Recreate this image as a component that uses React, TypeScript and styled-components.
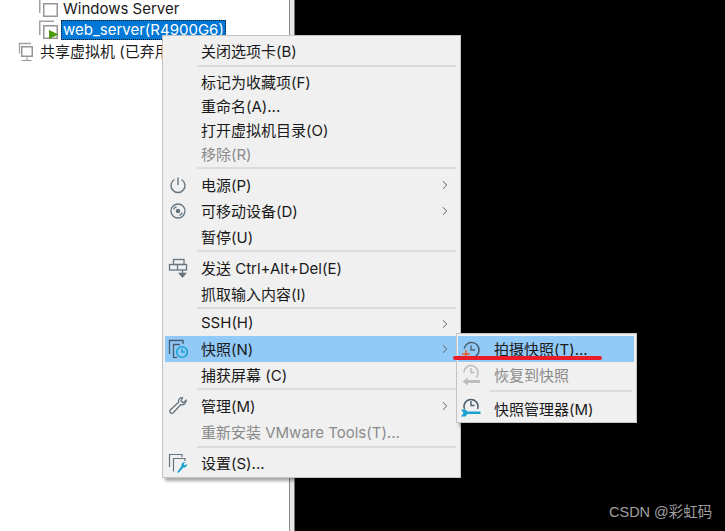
import React from "react";
import styled, { createGlobalStyle } from "styled-components";
import { ChevronRight } from "lucide-react";

const GlobalStyle = createGlobalStyle`
  html, body {
    margin: 0;
    padding: 0;
    background: #000000;
  }
  body {
    width: 725px;
    height: 531px;
    overflow: hidden;
    font-family: "Inter", "Noto Sans CJK SC", sans-serif;
    font-size: 15px;
    color: #1a1a1a;
  }
`;

const Page = styled.div`
  position: relative;
  display: flex;
  width: 725px;
  height: 531px;
  overflow: hidden;
  background: #000000;
`;

const Library = styled.div`
  width: 289px;
  height: 531px;
  background: #ffffff;
  overflow: hidden;
`;

const Splitter = styled.div`
  width: 6px;
  height: 531px;
  box-sizing: border-box;
  background: #e6e6e6;
  border-left: 1px solid #8a8a8a;
  border-right: 1px solid #707070;
`;

const Tree = styled.div`
  display: flex;
  flex-direction: column;
`;

const TreeRow = styled.div<{ $indent: number }>`
  display: flex;
  align-items: center;
  gap: 2px;
  height: 22px;
  padding-left: ${(p) => p.$indent}px;
  white-space: nowrap;
`;

// the first row is scrolled partly out of the pane
const ClippedRow = styled(TreeRow)`
  height: 18px;
  margin-bottom: 1px;
  align-items: flex-end;
`;

const TreeLabel = styled.span<{ $selected?: boolean }>`
  padding: 0 2px;
  line-height: 20px;
  outline: ${(p) => (p.$selected ? "1px dotted #1a1a1a" : "none")};
  outline-offset: -1px;
  background: ${(p) => (p.$selected ? "#0078d7" : "transparent")};
  color: ${(p) => (p.$selected ? "#ffffff" : "#1a1a1a")};
`;

const ClippedLabel = styled(TreeLabel)`
  align-self: flex-start;
  line-height: 17px;
`;

const Menu = styled.div`
  position: absolute;
  left: 162px;
  top: 35px;
  width: 299px;
  box-sizing: border-box;
  padding: 2px 2px 1px;
  background: #f0f0f0;
  border: 1px solid #c4c4c4;
  box-shadow: 3px 3px 3px rgba(0, 0, 0, 0.35);
`;

const SubMenu = styled(Menu)`
  left: 456px;
  top: 333px;
  width: 181px;
  padding: 2px 2px 0 1px;
  z-index: 2;
`;

const Row = styled.div<{ $height: number; $active?: boolean; $disabled?: boolean }>`
  display: flex;
  align-items: center;
  height: ${(p) => p.$height}px;
  padding-left: 36px;
  background: ${(p) => (p.$active ? "#91c9f7" : "transparent")};
  color: ${(p) => (p.$disabled ? "#8a8a8a" : "#1a1a1a")};
  white-space: nowrap;
`;

const Label = styled.span`
  flex: 1;
  padding-bottom: 2px;
`;

const IconSlot = styled.span<{ $x: number }>`
  position: absolute;
  left: ${(p) => p.$x}px;
  display: flex;
`;

const RowArrow = styled(ChevronRight)`
  width: 14px;
  height: 14px;
  margin-right: 6px;
  color: #555555;
`;

const Separator = styled.div<{ $top: number; $bottom: number }>`
  height: 2px;
  margin: ${(p) => p.$top}px 2px ${(p) => p.$bottom}px 32px;
  background: #dcdcdc;
`;

const RedStroke = styled.div`
  position: absolute;
  left: 453px;
  top: 356px;
  width: 149px;
  height: 4px;
  border-radius: 2px;
  background: #ea1c28;
  z-index: 3;
`;

const Watermark = styled.div`
  position: absolute;
  left: 609px;
  top: 503px;
  color: #a0a0a0;
  font-family: "Liberation Sans", "Noto Sans CJK SC", sans-serif;
  font-size: 14.5px;
  line-height: 18px;
  white-space: nowrap;
`;

const SLATE = "#66757f";
const DARK = "#465a6b";
const CYAN = "#1ba1d0";

const VmIcon = ({ play }: { play?: boolean }) => (
  <svg width="20" height="20" viewBox="0 0 20 20" fill="none">
    <path d="M0.75 15V1.25H15" stroke="#a2a2a2" strokeWidth="1.5" />
    <rect x="4.75" y="5.75" width="13.5" height="12.5" fill="#fff" stroke="#969696" strokeWidth="1.5" />
    {play && <path d="M10 10L19.5 14.5L10 19Z" fill="#4f9a0c" />}
  </svg>
);

const SharedIcon = () => (
  <svg width="20" height="20" viewBox="0 0 20 20" fill="none">
    <path d="M3.5 11.5V1.5H15" stroke="#a2a2a2" strokeWidth="1.3" />
    <rect x="5.75" y="4.75" width="10.5" height="9.5" fill="#fff" stroke="#969696" strokeWidth="1.5" />
    <path d="M11 15V18" stroke="#969696" />
    <path d="M5.5 18.5H15.5" stroke="#969696" />
  </svg>
);

const PowerIcon = () => (
  <svg width="20" height="20" viewBox="0 0 20 20" fill="none" stroke={SLATE} strokeWidth="1.4">
    <path d="M6.5 4.5A7 7 0 1 0 13.5 4.5" />
    <path d="M10 2.5V10" />
  </svg>
);

const DiscIcon = () => (
  <svg width="20" height="20" viewBox="0 0 20 20" fill="none" stroke={SLATE} strokeWidth="1.3">
    <circle cx="10" cy="10" r="7" />
    <circle cx="10" cy="10" r="1.6" fill={SLATE} />
    <path d="M5.7 8.5A4.5 4.5 0 0 1 8.5 5.7M14.3 11.5A4.5 4.5 0 0 1 11.5 14.3" />
  </svg>
);

const SendKeysIcon = () => (
  <svg width="20" height="20" viewBox="0 0 20 20" fill="none" stroke={SLATE} strokeWidth="1.3">
    <rect x="5.5" y="1.5" width="10.5" height="5" />
    <rect x="1.5" y="6.5" width="17" height="5.5" />
    <path d="M9.5 6.5V12" />
    <path d="M14.5 12V17" />
    <path d="M11.5 15.5L14.5 19L17.5 15.5Z" fill={SLATE} />
  </svg>
);

const SnapshotIcon = () => (
  <svg width="20" height="20" viewBox="0 0 20 20" fill="none">
    <path d="M1.5 15V1.5H15V5" stroke={DARK} strokeWidth="1.3" />
    <path d="M5.5 19V5.5H12" stroke={DARK} strokeWidth="1.3" />
    <path d="M5.5 18.5H9" stroke={DARK} strokeWidth="1.3" />
    <circle cx="14" cy="13" r="5.3" fill="#91c9f7" stroke={CYAN} strokeWidth="1.6" />
    <path d="M14 9.5V13H17" stroke={CYAN} strokeWidth="1.3" />
  </svg>
);

const WrenchIcon = () => (
  <svg width="20" height="20" viewBox="0 0 20 20" fill="none" stroke={SLATE} strokeWidth="1.3">
    <path d="M14.5 1.7C11.8 1.5 10 3.6 10.6 6.2L2.5 13.8C0.6 15.7 3.4 18.6 5.3 16.7L12.8 8.6C15.5 9.6 18.6 7.5 18.2 4.2L15.2 6.8L13 4.8Z" />
  </svg>
);

const SettingsIcon = () => (
  <svg width="20" height="20" viewBox="0 0 20 20" fill="none">
    <path d="M1.5 14V1.5H14V4" stroke={SLATE} strokeWidth="1.2" />
    <path d="M5.5 18.5V5.5H17V8" stroke={SLATE} strokeWidth="1.2" />
    <path d="M9 19.5L13.5 13C13 10.5 15 8.5 17.5 9L15.5 11L17 12.5L19 10.5C19.5 13 17.5 15 15.2 14.6L11 19.5Z" fill={CYAN} />
  </svg>
);

const TakeSnapshotIcon = () => (
  <svg width="22" height="22" viewBox="0 0 22 22" fill="none">
    <path d="M4.2 10.5A7.5 7.5 0 1 1 11 19.5" stroke="#4c5f6e" strokeWidth="1.5" />
    <path d="M11 7.5V12H15" stroke="#4c5f6e" strokeWidth="1.4" />
    <path d="M6 12V20M2 16H10" stroke="#ef5a22" strokeWidth="1.4" />
  </svg>
);

const RevertIcon = () => (
  <svg width="22" height="22" viewBox="0 0 22 22" fill="none" stroke="#bdbdbd" strokeWidth="1.5">
    <path d="M4 8.5A7 7 0 1 1 16 13.5" />
    <path d="M11 4V8.5H14.5" />
    <path d="M20 17.5H7" strokeWidth="3" />
    <path d="M8 13.5L2.5 17.5L8 21.5Z" fill="#bdbdbd" stroke="none" />
  </svg>
);

const ManagerIcon = () => (
  <svg width="22" height="22" viewBox="0 0 22 22" fill="none">
    <path d="M4.5 11A7 7 0 1 1 17.5 11" stroke="#4c5f6e" strokeWidth="1.5" />
    <path d="M11 3V7.5H14.5" stroke="#4c5f6e" strokeWidth="1.4" />
    <path d="M1 11.5H5.5L7.5 13.5H20.5V16H7.5L5.5 18.5H1L3.5 15Z" fill={CYAN} />
  </svg>
);

type Item =
  | { sep: true; top: number; bottom: number }
  | {
      sep?: false;
      label: string;
      height: number;
      icon?: React.ReactNode;
      arrow?: boolean;
      active?: boolean;
      disabled?: boolean;
    };

const mainItems: Item[] = [
  { label: "关闭选项卡(B)", height: 26 },
  { sep: true, top: 1, bottom: 3 },
  { label: "标记为收藏项(F)", height: 24 },
  { label: "重命名(A)...", height: 24 },
  { label: "打开虚拟机目录(O)", height: 24 },
  { label: "移除(R)", height: 24, disabled: true },
  { sep: true, top: 1, bottom: 3 },
  { label: "电源(P)", height: 26, icon: <PowerIcon />, arrow: true },
  { label: "可移动设备(D)", height: 26, icon: <DiscIcon />, arrow: true },
  { label: "暂停(U)", height: 26 },
  { sep: true, top: 0, bottom: 3 },
  { label: "发送 Ctrl+Alt+Del(E)", height: 26, icon: <SendKeysIcon /> },
  { label: "抓取输入内容(I)", height: 26 },
  { sep: true, top: 0, bottom: 2 },
  { label: "SSH(H)", height: 25, arrow: true },
  { label: "快照(N)", height: 26, icon: <SnapshotIcon />, arrow: true, active: true },
  { label: "捕获屏幕 (C)", height: 26 },
  { sep: true, top: 0, bottom: 3 },
  { label: "管理(M)", height: 26, icon: <WrenchIcon />, arrow: true },
  { label: "重新安装 VMware Tools(T)...", height: 26, disabled: true },
  { sep: true, top: 1, bottom: 2 },
  { label: "设置(S)...", height: 26, icon: <SettingsIcon /> },
];

const subItems: Item[] = [
  { label: "拍摄快照(T)...", height: 26, icon: <TakeSnapshotIcon />, active: true },
  { label: "恢复到快照", height: 26, icon: <RevertIcon />, disabled: true },
  { sep: true, top: 2, bottom: 4 },
  { label: "快照管理器(M)", height: 26, icon: <ManagerIcon /> },
];

const MenuItems = ({ items, iconX }: { items: Item[]; iconX: number }) => (
  <>
    {items.map((item, i) =>
      item.sep ? (
        <Separator key={i} $top={item.top} $bottom={item.bottom} />
      ) : (
        <Row key={i} $height={item.height} $active={item.active} $disabled={item.disabled}>
          {item.icon && <IconSlot $x={iconX}>{item.icon}</IconSlot>}
          <Label>{item.label}</Label>
          {item.arrow && <RowArrow strokeWidth={1.6} />}
        </Row>
      )
    )}
  </>
);

export default function App() {
  return (
    <Page>
      <GlobalStyle />
      <Library>
        <Tree>
          <ClippedRow $indent={39}>
            <VmIcon />
            <ClippedLabel>Windows Server</ClippedLabel>
          </ClippedRow>
          <TreeRow $indent={39}>
            <VmIcon play />
            <TreeLabel $selected>web_server(R4900G6)</TreeLabel>
          </TreeRow>
          <TreeRow $indent={16}>
            <SharedIcon />
            <TreeLabel>共享虚拟机 (已弃用)</TreeLabel>
          </TreeRow>
        </Tree>
      </Library>
      <Splitter />
      <Menu>
        <MenuItems items={mainItems} iconX={5} />
      </Menu>
      <SubMenu>
        <MenuItems items={subItems} iconX={3} />
      </SubMenu>
      <RedStroke />
      <Watermark>CSDN @彩虹码</Watermark>
    </Page>
  );
}
